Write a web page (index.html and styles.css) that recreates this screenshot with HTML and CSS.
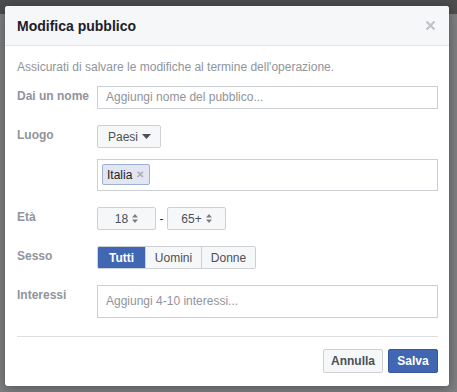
FILE: index.html
```html
<!DOCTYPE html>
<html lang="it">
<head>
    <meta charset="UTF-8">
    <meta name="viewport" content="width=device-width, initial-scale=1.0">
    <title>Modifica pubblico</title>
    <link rel="stylesheet" href="styles.css">
</head>
<body>
    <div class="backdrop">
        <div class="bg-top"></div>
    </div>

    <div class="dialog">
        <div class="dialog-header">
            <h1>Modifica pubblico</h1>
            <svg class="close" width="11" height="11" viewBox="0 0 11 11">
                <path d="M1.5 1.5 L9.5 9.5 M9.5 1.5 L1.5 9.5" stroke="#bec2c9" stroke-width="2.2"/>
            </svg>
        </div>

        <div class="dialog-body">
            <p class="hint">Assicurati di salvare le modifiche al termine dell'operazione.</p>

            <div class="row">
                <label>Dai un nome</label>
                <div class="field">
                    <div class="input">Aggiungi nome del pubblico...</div>
                </div>
            </div>

            <div class="row">
                <label>Luogo</label>
                <div class="field">
                    <div class="btn">Paesi
                        <svg width="9" height="5" viewBox="0 0 9 5"><path d="M0 0 H9 L4.5 5 Z" fill="#4b4f56"/></svg>
                    </div>
                    <div class="tags">
                        <span class="tag">Italia <span class="tag-x">&#10005;</span></span>
                    </div>
                </div>
            </div>

            <div class="row">
                <label>Età</label>
                <div class="field age">
                    <div class="btn select">18
                        <svg width="6" height="9" viewBox="0 0 6 9"><path d="M0 3.5 L3 0 L6 3.5 Z M0 5.5 L3 9 L6 5.5 Z" fill="#7f7f7f"/></svg>
                    </div>
                    <span class="dash">-</span>
                    <div class="btn select">65+
                        <svg width="6" height="9" viewBox="0 0 6 9"><path d="M0 3.5 L3 0 L6 3.5 Z M0 5.5 L3 9 L6 5.5 Z" fill="#7f7f7f"/></svg>
                    </div>
                </div>
            </div>

            <div class="row">
                <label>Sesso</label>
                <div class="field">
                    <div class="segmented">
                        <span class="seg active">Tutti</span>
                        <span class="seg">Uomini</span>
                        <span class="seg">Donne</span>
                    </div>
                </div>
            </div>

            <div class="row">
                <label>Interessi</label>
                <div class="field">
                    <div class="input tall">Aggiungi 4-10 interessi...</div>
                </div>
            </div>
        </div>

        <div class="dialog-footer">
            <span class="btn cancel">Annulla</span>
            <span class="btn primary">Salva</span>
        </div>
    </div>
</body>
</html>
```

FILE: styles.css
```css
* {
    margin: 0;
    padding: 0;
    box-sizing: border-box;
}

body {
    font-family: "Liberation Sans", Arial, sans-serif;
    font-size: 12px;
    color: #1d2129;
    background-color: #7e7f81;
    width: 457px;
    height: 392px;
    overflow: hidden;
    position: relative;
    padding: 6px 8px 0 5px;
}

.backdrop {
    position: absolute;
    top: 0;
    left: 0;
    width: 100%;
    height: 100%;
}

.bg-top {
    height: 14px;
    background-color: #4d4d4e;
}

.dialog {
    position: relative;
    width: 444px;
    height: 380px;
    background: #fff;
    border-radius: 3px;
    box-shadow: 0 2px 12px rgba(0, 0, 0, 0.35);
    overflow: hidden;
}

.dialog-header {
    height: 40px;
    background: #f6f7f9;
    border-bottom: 1px solid #e5e5e5;
    display: flex;
    align-items: center;
    justify-content: space-between;
    padding: 0 12px;
}

.dialog-header h1 {
    font-size: 14px;
    font-weight: bold;
    color: #1d2129;
    margin-top: 1px;
}

.close {
    margin-right: 1px;
}

.dialog-body {
    padding-top: 13px;
    border-bottom: 1px solid #dddfe2;
    margin: 0 11px 0 12px;
    height: 291px;
}

.hint {
    color: #90949c;
    line-height: 16px;
    margin-bottom: 11px;
}

.row {
    display: flex;
    margin-bottom: 16px;
}

.row label {
    width: 80px;
    flex-shrink: 0;
    font-weight: bold;
    color: #90949c;
    line-height: 16px;
    padding-top: 2px;
}

.field {
    flex: 1;
    display: flex;
    flex-direction: column;
    align-items: flex-start;
}

.input {
    width: 100%;
    height: 23px;
    border: 1px solid #ccd0d5;
    color: #90949c;
    padding: 0 8px;
    line-height: 21px;
}

.input.tall {
    height: 33px;
    line-height: 31px;
}

.btn {
    height: 23px;
    display: inline-flex;
    align-items: center;
    gap: 4px;
    padding: 0 9px 0 10px;
    border: 1px solid #ced0d4;
    border-radius: 2px;
    background: #f6f7f9;
    color: #4b4f56;
}

.tags {
    margin-top: 11px;
    width: 100%;
    height: 32px;
    border: 1px solid #ccd0d5;
    padding: 4px 4px;
}

.tag {
    display: inline-flex;
    align-items: center;
    gap: 4px;
    height: 21px;
    padding: 0 5px 0 4px;
    background: #e2e6f0;
    border: 1px solid #9cb0d6;
    border-radius: 2px;
    color: #1d2129;
}

.tag-x {
    color: #a8adb7;
    font-size: 10px;
    font-weight: bold;
}

.age {
    flex-direction: row;
    align-items: center;
}

.select {
    width: 59px;
    justify-content: center;
    padding: 0;
}

.dash {
    width: 11px;
    text-align: center;
    color: #1d2129;
}

.segmented {
    display: flex;
    height: 23px;
    border: 1px solid #ced0d4;
    border-radius: 2px;
    overflow: hidden;
}

.seg {
    display: flex;
    align-items: center;
    padding: 0 8px;
    width: 56px;
    justify-content: center;
    color: #4b4f56;
    background: #f6f7f9;
    border-left: 1px solid #ced0d4;
}

.seg:first-child {
    border-left: none;
}

.seg:last-child {
    width: 54px;
}

.seg.active {
    background: #4267b2;
    color: #fff;
    font-weight: bold;
    width: 47px;
}

.dialog-footer {
    display: flex;
    justify-content: flex-end;
    gap: 5px;
    padding: 12px 11px 0 0;
}

.btn.cancel {
    height: 24px;
    width: 60px;
    justify-content: center;
    padding: 0;
    font-weight: bold;
}

.btn.primary {
    height: 24px;
    width: 50px;
    justify-content: center;
    padding: 0;
    font-weight: bold;
    background: #4267b2;
    border-color: #365899;
    color: #fff;
}
```
